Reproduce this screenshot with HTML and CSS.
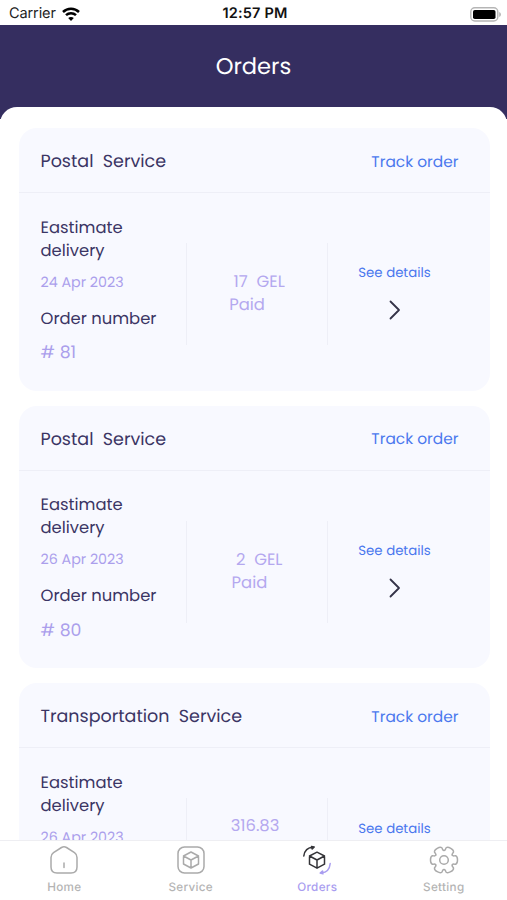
FILE: index.html
```html
<!DOCTYPE html>
<html lang="en">
<head>
<meta charset="utf-8">
<title>Orders</title>
<link rel="stylesheet" href="styles.css">
</head>
<body>
<div class="phone">
  <div class="status">
    <div class="carrier"><span>Carrier</span>
      <svg width="18" height="14" viewBox="0 0 18 14" fill="none" stroke="#000" stroke-width="2.5"><path d="M1 5C5.4.7 12.6.7 17 5M4 8.200C6.800 5.500 11.200 5.500 14 8.200"/><path d="M9 14L6.200 11.100C7.800 9.700 10.200 9.700 11.800 11.100Z" fill="#000" stroke="none"/></svg>
    </div>
    <div class="time">12:57 PM</div>
    <svg class="battery" width="31" height="15" viewBox="0 0 31 15"><rect x=".8" y=".8" width="27" height="13.200" rx="4" fill="#fff" stroke="#b5b5b5" stroke-width="1.400"/><rect x="3" y="3" width="22.500" height="9" rx="1.800"/><path d="M29.300 5c2 .9 2 4.100 0 5z" fill="#aaa"/></svg>
  </div>
  <header class="top"><h1>Orders</h1></header>
  <main class="sheet">
    <section class="card">
      <div class="card-head"><h2>Postal&nbsp; Service</h2><a class="track">Track order</a></div>
      <div class="card-body">
        <div class="info"><p class="label est">Eastimate<br>delivery</p><p class="date">24 Apr 2023</p><p class="label num">Order number</p><p class="number"># 81</p></div>
        <div class="price"><p><span class="amount">&nbsp;17&nbsp; GEL</span><br><span class="paid">Paid</span></p></div>
        <div class="details"><a>See details</a><svg width="12" height="20" viewBox="0 0 12 20"><path d="M1.500 1.500L10 10L1.500 18.500"/></svg></div>
      </div>
    </section>
    <section class="card">
      <div class="card-head"><h2>Postal&nbsp; Service</h2><a class="track">Track order</a></div>
      <div class="card-body">
        <div class="info"><p class="label est">Eastimate<br>delivery</p><p class="date">26 Apr 2023</p><p class="label num">Order number</p><p class="number"># 80</p></div>
        <div class="price"><p><span class="amount">&nbsp;2&nbsp; GEL</span><br><span class="paid">Paid</span></p></div>
        <div class="details"><a>See details</a><svg width="12" height="20" viewBox="0 0 12 20"><path d="M1.500 1.500L10 10L1.500 18.500"/></svg></div>
      </div>
    </section>
    <section class="card">
      <div class="card-head"><h2>Transportation&nbsp; Service</h2><a class="track">Track order</a></div>
      <div class="card-body">
        <div class="info"><p class="label est">Eastimate<br>delivery</p><p class="date">26 Apr 2023</p></div>
        <div class="price tall"><p><span class="amount">316.83</span></p></div>
        <div class="details"><a>See details</a></div>
      </div>
    </section>
  </main>
  <nav class="tabs">
    <a class="tab"><svg width="30" height="30" viewBox="-15 -15 30 30"><path d="M-2.500-12.500Q0-14 2.500-12.500L10.500-7.300Q13-5.500 13-2.500V7Q13 13 7 13H-7Q-13 13-13 7V-2.500Q-13-5.500-10.500-7.300ZM0 3V7.500"/></svg><span>Home</span></a>
    <a class="tab"><svg width="30" height="30" viewBox="-15 -15 30 30"><rect x="-13" y="-13" width="26" height="26" rx="6.500"/><path d="M0-8L7.500-4V4L0 8L-7.500 4V-4ZM-7.500-4L0 0L7.500-4M0 0V8"/></svg><span>Service</span></a>
    <a class="tab active"><svg width="30" height="30" viewBox="-15 -15 30 30"><g class="box"><path d="M0-7.800L7.500-4V4.200L0 8.200L-7.500 4.200V-4ZM-7.500-4L0 0L7.500-4M0 0V8.200"/><path d="M-13.200-4C-12.500-9-9.500-12.500-4-12.700M-5.500-13.500L-2.800-13L-4.800-11Z"/></g><path d="M13.200 3.500C12.700 9 9.500 12.500 4.500 12.700M5.500 11L3.200 13L6 13.800Z"/></svg><span>Orders</span></a>
    <a class="tab"><svg width="30" height="30" viewBox="-15 -15 30 30"><defs><path id="lobe" d="M8.300-4.800C9.300-3.100 10.300-4.600 11.700-4.200C14.100-3.300 14.100 3.300 11.700 4.200C10.300 4.600 9.300 3.100 8.300 4.800"/></defs><use href="#lobe"/><use href="#lobe" transform="rotate(60)"/><use href="#lobe" transform="rotate(120)"/><use href="#lobe" transform="rotate(180)"/><use href="#lobe" transform="rotate(240)"/><use href="#lobe" transform="rotate(300)"/><circle r="4.300"/></svg><span>Setting</span></a>
  </nav>
</div>
</body>
</html>
```
FILE: styles.css
```css
* { box-sizing: border-box; }
body { margin: 0; background: #fff; }
h1, h2, p { margin: 0; font-weight: 400; }
.phone {
  width: 507px;
  height: 900px;
  overflow: hidden;
  display: flex;
  flex-direction: column;
  font-family: Poppins, Inter, "Liberation Sans", sans-serif;
  text-rendering: geometricPrecision;
  color: #3b3564;
}
.status {
  height: 25.4px;
  flex: none;
  display: grid;
  grid-template-columns: 1fr auto 1fr;
  align-items: center;
  padding: 3px 6px 0 9px;
  font: 14.5px/22px Inter, sans-serif;
  color: #222;
}
.carrier { display: flex; align-items: center; gap: 6px; letter-spacing: -0.1px; }
.time { font-weight: 600; letter-spacing: 0.2px; color: #111; }
.battery { justify-self: end; }
.top {
  height: 94px;
  flex: none;
  background: #352e60;
  text-align: center;
  padding-top: 24px;
}
.top h1 { color: #fff; font-size: 22.6px; line-height: 34px; }
.sheet {
  flex: 1;
  min-height: 0;
  overflow: hidden;
  margin-top: -12.4px;
  padding: 21px 17.5px 0 18.5px;
  background: #fff;
  border-radius: 17px 17px 0 0;
}
.card {
  height: 262.7px;
  margin-bottom: 15px;
  border-radius: 18px;
  background: #f8f9ff;
}
.card-head {
  height: 65px;
  display: flex;
  justify-content: space-between;
  align-items: center;
  padding: 4px 31px 0 22px;
  border-bottom: 1px solid #eeeff7;
}
.card-head h2 { font-size: 17.5px; }
.track { font-size: 15.4px; color: #4b78ee; }
.card-body { display: grid; grid-template-columns: 167px 142px 1fr; }
.info { padding: 22.5px 0 0 22px; }
.label { font-size: 16.4px; line-height: 23.3px; }
.date { margin-top: 8.6px; font-size: 14.25px; line-height: 22px; color: #ab9fec; }
.num { margin-top: 14px; }
.number { margin-top: 11px; font-size: 17.3px; line-height: 24px; color: #ab9fec; }
.price {
  height: 102px;
  margin-top: 50px;
  border: solid #eeeff7;
  border-width: 0 1px;
  display: flex;
  justify-content: center;
  padding: 27px 0 0 1px;
  color: #b4a8ef;
  font-size: 16.4px;
  line-height: 23px;
}
.price.tall { padding: 16px 3px 0 0; }
.details {
  display: flex;
  flex-direction: column;
  align-items: center;
  gap: 17px;
  padding: 70.4px 28px 0 0;
  font-size: 13.3px;
  line-height: 20px;
  color: #4b78ee;
}
.details svg { fill: none; stroke: #343348; stroke-width: 1.8; stroke-linecap: round; stroke-linejoin: round; }
.tabs {
  height: 60px;
  flex: none;
  display: grid;
  grid-template-columns: repeat(4, 1fr);
  padding-left: 1px;
  border-top: 1px solid #eeeef2;
  background: #fff;
}
.tab {
  display: flex;
  flex-direction: column;
  align-items: center;
  padding-top: 4px;
  gap: 4px;
  font: 500 11.7px/16px Inter, sans-serif;
  letter-spacing: 0.3px;
  color: #b4b4b4;
}
.tab svg { fill: none; stroke: #aaa; stroke-width: 1.5; stroke-linejoin: round; stroke-linecap: round; }
.tab.active { color: #a99df0; }
.tab.active svg { stroke: #a99df0; }
.tab.active .box { stroke: #343438; }
```
